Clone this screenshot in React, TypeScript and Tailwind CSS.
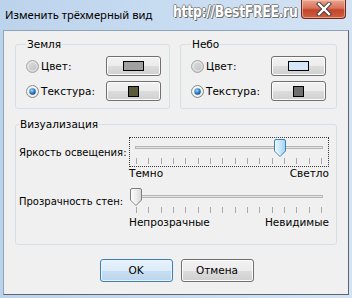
import React from "react";

const uiFont = "font-['DejaVu_Sans','Liberation_Sans',sans-serif]";

function Radio({ checked }: { checked?: boolean }) {
  return (
    <svg width="13" height="13" viewBox="0 0 13 13" className="shrink-0">
      <defs>
        <linearGradient id="radOff" x1="0" y1="0" x2="1" y2="1">
          <stop offset="0" stopColor="#e2e2e2" />
          <stop offset="1" stopColor="#bdbdbd" />
        </linearGradient>
        <linearGradient id="radOn" x1="0" y1="0" x2="1" y2="1">
          <stop offset="0" stopColor="#f6f6f6" />
          <stop offset="1" stopColor="#d8d8d8" />
        </linearGradient>
        <radialGradient id="radDot" cx="0.4" cy="0.35" r="0.7">
          <stop offset="0" stopColor="#9fdcfb" />
          <stop offset="0.55" stopColor="#2f86cf" />
          <stop offset="1" stopColor="#0c3d7c" />
        </radialGradient>
      </defs>
      <circle cx="6.5" cy="6.5" r="6" fill={checked ? "url(#radOn)" : "url(#radOff)"} stroke={checked ? "#8a8a8a" : "#a8a8a8"} />
      <circle cx="6.5" cy="6.5" r="4.5" fill="none" stroke={checked ? "#ffffff" : "#eeeeee"} strokeWidth="0.8" />
      {checked && <circle cx="6.5" cy="6.5" r="3.2" fill="url(#radDot)" />}
    </svg>
  );
}

function SwatchButton({ children }: { children: React.ReactNode }) {
  return (
    <div className="ml-auto flex h-[20px] w-[55px] items-center justify-center rounded-[3px] border border-[#707070] bg-[linear-gradient(#f2f2f2_0%,#ebebeb_50%,#dddddd_50%,#cfcfcf_100%)] shadow-[inset_0_0_0_1px_#fcfcfc]">
      {children}
    </div>
  );
}

function OptionRow({ label, checked, swatch }: { label: string; checked?: boolean; swatch: React.ReactNode }) {
  return (
    <div className="flex h-[20px] w-[135px] items-center">
      <Radio checked={checked} />
      <span className="ml-[2px] whitespace-nowrap text-[10.5px] leading-[13px] text-black">{label}</span>
      <SwatchButton>{swatch}</SwatchButton>
    </div>
  );
}

function Group({ title, className, children }: { title: string; className?: string; children: React.ReactNode }) {
  return (
    <fieldset className={`rounded-[3px] border border-[#d5dfe5] px-[3px] ${className ?? ""}`}>
      <legend className="px-[1px] text-[10.5px] leading-[13px] text-black">{title}</legend>
      {children}
    </fieldset>
  );
}

function Slider({ thumbX, focused }: { thumbX: number; focused?: boolean }) {
  const ticks = Array.from({ length: 16 }, (_, i) => Math.round(7 + (i * 185) / 15) + 0.5);
  const l = thumbX - 5.5;
  const r = thumbX + 5.5;
  const d = `M${l} 4 Q${l} 2.5 ${l + 1.5} 2.5 H${r - 1.5} Q${r} 2.5 ${r} 4 V14 L${thumbX} 19.5 L${l} 14 Z`;
  const gid = focused ? "thumbBlue" : "thumbGray";
  return (
    <div className={`h-[30px] w-[200px] shrink-0 ${focused ? "outline-1 outline-dotted -outline-offset-1 outline-[#3a3a3a]" : ""}`}>
      <svg width="200" height="30" viewBox="0 0 200 30">
        <defs>
          <linearGradient id="thumbBlue" x1="0" y1="0" x2="1" y2="0">
            <stop offset="0" stopColor="#e9f6fe" />
            <stop offset="0.5" stopColor="#c9e8fa" />
            <stop offset="1" stopColor="#9fd3f2" />
          </linearGradient>
          <linearGradient id="thumbGray" x1="0" y1="0" x2="1" y2="0">
            <stop offset="0" stopColor="#fbfbfb" />
            <stop offset="0.5" stopColor="#eeeeee" />
            <stop offset="1" stopColor="#d6d6d6" />
          </linearGradient>
        </defs>
        <rect x="6.5" y="9.5" width="187" height="2" fill="#e4e4e4" stroke="#b6b6b6" />
        {ticks.map((x) => (
          <line key={x} x1={x} y1="21" x2={x} y2="27" stroke="#a9a9a9" strokeWidth="1" />
        ))}
        <path d={d} fill={`url(#${gid})`} stroke={focused ? "#3c7fb1" : "#7d7d7d"} strokeWidth="1" />
        <path
          d={`M${l + 1} 4 V13.8 L${thumbX} 18.3`}
          fill="none"
          stroke="#ffffff"
          strokeOpacity="0.8"
          strokeWidth="1"
        />
      </svg>
    </div>
  );
}

function SliderRow({ label, thumbX, focused, left, right }: { label: string; thumbX: number; focused?: boolean; left: string; right: string }) {
  return (
    <div className="flex flex-col">
      <div className="flex items-center">
        <span className="w-[110px] shrink-0 whitespace-nowrap text-[10px] leading-[13px] text-black">{label}</span>
        <Slider thumbX={thumbX} focused={focused} />
      </div>
      <div className="ml-[110px] flex w-[200px] justify-between whitespace-nowrap text-[10.5px] leading-[13px] text-black">
        <span>{left}</span>
        <span>{right}</span>
      </div>
    </div>
  );
}

function DialogButton({ label, isDefault }: { label: string; isDefault?: boolean }) {
  return (
    <div
      className={`flex h-[23px] w-[73px] items-center justify-center rounded-[3px] border text-[10.5px] leading-[13px] text-black ${
        isDefault
          ? "border-[#3c7fb1] bg-[linear-gradient(#e8f3fc_0%,#dcebf8_50%,#c9def1_50%,#bcd5ec_100%)] shadow-[inset_0_0_0_1px_#e9f4fc]"
          : "border-[#707070] bg-[linear-gradient(#f2f2f2_0%,#ebebeb_50%,#dddddd_50%,#cfcfcf_100%)] shadow-[inset_0_0_0_1px_#fcfcfc]"
      }`}
    >
      {label}
    </div>
  );
}

function CloseButton() {
  return (
    <div className="mr-[6px] flex h-[19px] w-[45px] items-center justify-center self-start rounded-b-[4px] border border-t-0 border-[#6b2a1e] bg-[linear-gradient(#e9a48f_0%,#d8735a_45%,#c4452c_55%,#d0603f_100%)] shadow-[inset_0_0_0_1px_rgba(255,210,190,0.55)]">
      <svg width="16" height="14" viewBox="0 0 16 14">
        <path d="M3 2 L13 12 M13 2 L3 12" stroke="#3c3c3c" strokeWidth="4.2" strokeLinecap="square" />
        <path d="M3 2 L13 12 M13 2 L3 12" stroke="#ffffff" strokeWidth="2.4" strokeLinecap="square" />
      </svg>
    </div>
  );
}

export default function App() {
  return (
    <div className={`relative flex h-[298px] w-[352px] flex-col overflow-hidden bg-[linear-gradient(90deg,#bcd3ec_0%,#c8dcf1_50%,#d3e3f4_100%)] ${uiFont}`}>
      {/* Title bar */}
      <div className="flex h-[30px] shrink-0 items-center">
        <span className="pl-[5px] pb-[1px] font-['Noto_Sans','Open_Sans',sans-serif] text-[11.2px] leading-[16px] text-black">
          Изменить трёхмерный вид
        </span>
        <span className="absolute left-[173px] top-[3px] origin-left scale-x-[0.86] whitespace-nowrap font-['DejaVu_Sans_Condensed','DejaVu_Sans',sans-serif] text-[16px] leading-[18px] font-bold tracking-[-0.3px] text-white [text-shadow:1px_1px_0_#6d6d6d,-1px_0_0_#8a8a8a,0_-1px_0_#8a8a8a,1px_0_0_#6d6d6d]">
          http://BestFREE.ru
        </span>
        <div className="ml-auto self-start">
          <CloseButton />
        </div>
      </div>

      {/* Client area */}
      <div className="mx-[3px] flex h-[265px] flex-col border border-[#8ea2b8] border-r-[#5c6670] border-b-[#5c6670] bg-[#f0f0f0] px-[11px] pt-[7px]">
        <div className="flex gap-[10px]">
          <Group title="Земля" className="w-[155px] pt-[5px] pb-[7px] pl-[10px]">
            <div className="flex flex-col gap-[5px]">
              <OptionRow
                label="Цвет:"
                swatch={<div className="h-[10px] w-[21px] border border-black bg-[#a0a0a0]" />}
              />
              <OptionRow
                label="Текстура:"
                checked
                swatch={<div className="h-[11px] w-[11px] border border-black bg-[#5c5c3d]" />}
              />
            </div>
          </Group>
          <Group title="Небо" className="w-[157px] pt-[5px] pb-[7px] pl-[10px]">
            <div className="flex flex-col gap-[5px]">
              <OptionRow
                label="Цвет:"
                swatch={<div className="h-[10px] w-[21px] border border-black bg-[#d6e7fc]" />}
              />
              <OptionRow
                label="Текстура:"
                checked
                swatch={<div className="h-[11px] w-[11px] border border-black bg-[#6f6f6f]" />}
              />
            </div>
          </Group>
        </div>

        <Group title="Визуализация" className="mt-[9px] w-[322px] pt-[6px] pb-[15px] pl-[3px]">
          <div className="flex flex-col gap-[6px]">
            <SliderRow label="Яркость освещения:" thumbX={151} focused left="Темно" right="Светло" />
            <SliderRow label="Прозрачность стен:" thumbX={7} left="Непрозрачные" right="Невидимые" />
          </div>
        </Group>

        <div className="mt-[14px] flex justify-center gap-[8px] pl-[1px]">
          <DialogButton label="OK" isDefault />
          <DialogButton label="Отмена" />
        </div>
      </div>
    </div>
  );
}
